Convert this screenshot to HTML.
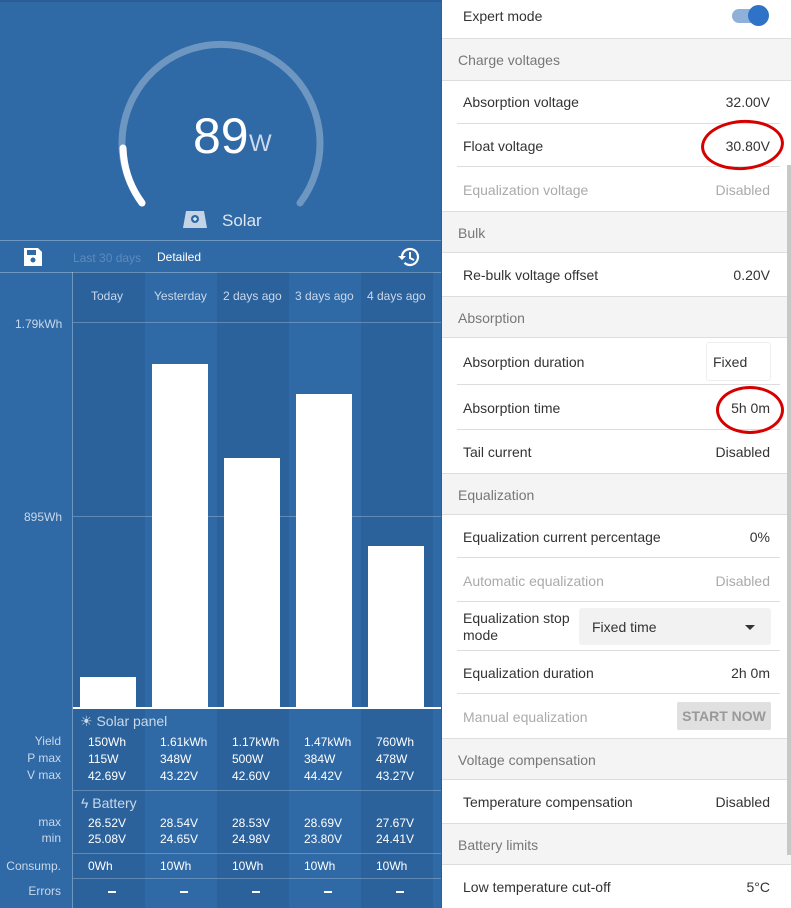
<!DOCTYPE html>
<html><head><meta charset="utf-8"><style>
*{margin:0;padding:0;box-sizing:border-box}
body{width:791px;height:908px;overflow:hidden;font-family:"Liberation Sans",sans-serif;position:relative;background:#fff}
#L{position:absolute;left:0;top:0;width:441px;height:908px;background:#2f69a6;color:#fff;border-top:2px solid #2a5d96}
.a{position:absolute;white-space:nowrap}
.col{position:absolute;top:272px;height:636px;width:72px}
.dk{background:rgba(0,0,0,0.06)}
.bar{position:absolute;background:#fff;width:56px;bottom:201px}
.hl{position:absolute;left:73px;width:368px;height:1px;background:rgba(255,255,255,0.25)}
.t{font-size:12px;color:#fff}
.lb{font-size:12px;color:#c9d8ea;text-align:right;width:61px;left:0}
#R{position:absolute;left:441px;top:0;width:350px;height:908px;background:#fff;border-left:1px solid #2a5f99}
.row{position:absolute;left:0;width:346px;font-size:14px;color:#333}
.row .k{position:absolute;left:21px}
.row .v{position:absolute;right:18px}
.sep{position:absolute;left:15px;right:8px;bottom:0;height:1px;background:#ddd}
.sec{position:absolute;left:0;width:350px;background:#f4f4f4;font-size:14px;color:#777;border-bottom:1px solid #ddd;border-top:1px solid #ddd}
.sec span{position:absolute;left:16px}
.dis{color:#aaa}
.ring{position:absolute;border:3px solid #d50000;border-radius:50%}
</style></head><body>
<div id="L">
<svg class="a" style="left:0;top:-2px" width="441" height="240">
<path d="M142 203 A99 99 0 1 1 300 203" fill="none" stroke="rgba(255,255,255,0.3)" stroke-width="7" stroke-linecap="round"/>
<path d="M142 203 A99 99 0 0 1 123 148" fill="none" stroke="#fff" stroke-width="7" stroke-linecap="round"/>
<path d="M186 211 L204 211 L207 228 L183 228 Z" fill="#c4d4e6"/>
<circle cx="195" cy="219" r="4" fill="#2f69a6"/><path d="M193 219h4M195 217v4" stroke="#fff" stroke-width="1.2"/>
</svg>
<div class="a" style="left:193px;top:106px;font-size:50px;line-height:56px">89</div>
<div class="a" style="left:249px;top:128px;font-size:24px;color:#c9d8ea">W</div>
<div class="a" style="left:222px;top:209px;font-size:17px;color:#dde6f1">Solar</div>
<div class="a" style="left:0;top:238px;width:441px;height:1px;background:rgba(255,255,255,0.3)"></div>
<div class="a" style="left:0;top:270px;width:441px;height:1px;background:rgba(255,255,255,0.3)"></div>
<svg class="a" style="left:23px;top:245px" width="20" height="20"><path d="M1 1h14l4 4v14H1z" fill="#fff"/><rect x="4" y="3" width="9" height="5" fill="#2f69a6"/><circle cx="10" cy="13" r="2.5" fill="#2f69a6"/></svg>
<div class="a" style="left:73px;top:249px;font-size:12px;color:#5d8bbd">Last 30 days</div>
<div class="a" style="left:157px;top:248px;font-size:12px">Detailed</div>
<svg class="a" style="left:397px;top:244px" width="24" height="22" viewBox="0 0 24 22"><path d="M5 11a8 8 0 1 1 2.5 5.8" fill="none" stroke="#fff" stroke-width="2.2"/><path d="M1 10h8l-4 4z" fill="#fff"/><path d="M13 6v6l4 2" fill="none" stroke="#fff" stroke-width="2"/></svg>
<div class="a" style="left:72px;top:270px;width:1px;height:636px;background:rgba(255,255,255,0.3)"></div>
<div style="position:absolute;left:0;top:-2px;width:441px;height:908px">
<div class="col dk" style="left:73px"></div><div class="col" style="left:145px"></div><div class="col dk" style="left:217px"></div><div class="col" style="left:289px"></div><div class="col dk" style="left:361px"></div>
<div class="a" style="left:91px;top:289px;font-size:12px;color:#c9d8ea">Today</div>
<div class="a" style="left:154px;top:289px;font-size:12px;color:#c9d8ea">Yesterday</div>
<div class="a" style="left:223px;top:289px;font-size:12px;color:#c9d8ea">2 days ago</div>
<div class="a" style="left:295px;top:289px;font-size:12px;color:#c9d8ea">3 days ago</div>
<div class="a" style="left:367px;top:289px;font-size:12px;color:#c9d8ea">4 days ago</div>
<div class="a" style="left:15px;top:317px;font-size:12px;color:#c9d8ea">1.79kWh</div>
<div class="a" style="left:24px;top:510px;font-size:12px;color:#c9d8ea">895Wh</div>
<div class="hl" style="top:322px"></div><div class="hl" style="top:516px"></div>
<div class="bar" style="left:80px;top:677px"></div>
<div class="bar" style="left:152px;top:364px"></div>
<div class="bar" style="left:224px;top:458px"></div>
<div class="bar" style="left:296px;top:394px"></div>
<div class="bar" style="left:368px;top:546px"></div>
<div class="hl" style="top:707px;height:2px;background:#fff"></div>
<div class="a" style="left:80px;top:713px;font-size:14px;color:#c9d8ea">☀ Solar panel</div>
<div class="a lb" style="top:734px">Yield</div><div class="a lb" style="top:751px">P max</div><div class="a lb" style="top:768px">V max</div>
<div class="hl" style="top:790px"></div>
<div class="a" style="left:81px;top:795px;font-size:14px;color:#c9d8ea">ϟ Battery</div>
<div class="a lb" style="top:815px">max</div><div class="a lb" style="top:831px">min</div>
<div class="hl" style="top:853px"></div>
<div class="a lb" style="top:859px">Consump.</div>
<div class="hl" style="top:878px"></div>
<div class="a lb" style="top:884px">Errors</div>
<div class="a t" style="left:88px;top:734px;line-height:17px">150Wh<br>115W<br>42.69V</div>
<div class="a t" style="left:160px;top:734px;line-height:17px">1.61kWh<br>348W<br>43.22V</div>
<div class="a t" style="left:232px;top:734px;line-height:17px">1.17kWh<br>500W<br>42.60V</div>
<div class="a t" style="left:304px;top:734px;line-height:17px">1.47kWh<br>384W<br>44.42V</div>
<div class="a t" style="left:376px;top:734px;line-height:17px">760Wh<br>478W<br>43.27V</div>
<div class="a t" style="left:88px;top:815px;line-height:16px">26.52V<br>25.08V</div>
<div class="a t" style="left:160px;top:815px;line-height:16px">28.54V<br>24.65V</div>
<div class="a t" style="left:232px;top:815px;line-height:16px">28.53V<br>24.98V</div>
<div class="a t" style="left:304px;top:815px;line-height:16px">28.69V<br>23.80V</div>
<div class="a t" style="left:376px;top:815px;line-height:16px">27.67V<br>24.41V</div>
<div class="a t" style="left:88px;top:859px">0Wh</div><div class="a t" style="left:160px;top:859px">10Wh</div><div class="a t" style="left:232px;top:859px">10Wh</div><div class="a t" style="left:304px;top:859px">10Wh</div><div class="a t" style="left:376px;top:859px">10Wh</div>
<div class="a" style="left:108px;top:891px;width:8px;height:2px;background:#fff"></div>
<div class="a" style="left:180px;top:891px;width:8px;height:2px;background:#fff"></div>
<div class="a" style="left:252px;top:891px;width:8px;height:2px;background:#fff"></div>
<div class="a" style="left:324px;top:891px;width:8px;height:2px;background:#fff"></div>
<div class="a" style="left:396px;top:891px;width:8px;height:2px;background:#fff"></div>
</div>
</div>
<div id="R">
<div class="row" style="top:0;height:38px"><span class="k" style="top:8px">Expert mode</span>
<div class="a" style="left:290px;top:9px;width:34px;height:14px;border-radius:7px;background:#8fb0d8"></div>
<div class="a" style="left:306px;top:5px;width:21px;height:21px;border-radius:50%;background:#2f73c8"></div></div>
<div class="sec" style="top:38px;height:43px"><span style="top:13px">Charge voltages</span></div>
<div class="row" style="top:81px;height:43px"><span class="k" style="top:13px">Absorption voltage</span><span class="v" style="top:13px">32.00V</span><div class="sep"></div></div>
<div class="row" style="top:124px;height:43px"><span class="k" style="top:14px">Float voltage</span><span class="v" style="top:14px">30.80V</span><div class="sep"></div></div>
<div class="row dis" style="top:167px;height:44px"><span class="k" style="top:15px">Equalization voltage</span><span class="v" style="top:15px">Disabled</span></div>
<div class="sec" style="top:211px;height:42px"><span style="top:13px">Bulk</span></div>
<div class="row" style="top:253px;height:43px"><span class="k" style="top:14px">Re-bulk voltage offset</span><span class="v" style="top:14px">0.20V</span></div>
<div class="sec" style="top:296px;height:42px"><span style="top:13px">Absorption</span></div>
<div class="row" style="top:338px;height:47px"><span class="k" style="top:16px">Absorption duration</span><div class="a" style="left:264px;top:4px;width:65px;height:39px;border:1px solid #eee;border-radius:3px"></div><span class="a" style="left:271px;top:16px">Fixed</span><div class="sep"></div></div>
<div class="row" style="top:385px;height:45px"><span class="k" style="top:15px">Absorption time</span><span class="v" style="top:15px">5h 0m</span><div class="sep"></div></div>
<div class="row" style="top:430px;height:43px"><span class="k" style="top:14px">Tail current</span><span class="v" style="top:14px">Disabled</span></div>
<div class="sec" style="top:473px;height:42px"><span style="top:13px">Equalization</span></div>
<div class="row" style="top:515px;height:43px"><span class="k" style="top:14px">Equalization current percentage</span><span class="v" style="top:14px">0%</span><div class="sep"></div></div>
<div class="row dis" style="top:558px;height:44px"><span class="k" style="top:15px">Automatic equalization</span><span class="v" style="top:15px">Disabled</span><div class="sep"></div></div>
<div class="row" style="top:602px;height:49px"><span class="k" style="top:8px;line-height:17px">Equalization stop<br>mode</span><div class="a" style="left:137px;top:6px;width:192px;height:37px;background:#f2f2f2;border-radius:3px"></div><span class="a" style="left:150px;top:17px">Fixed time</span><div class="a" style="left:303px;top:23px;border:5px solid transparent;border-top:5px solid #333"></div><div class="sep"></div></div>
<div class="row" style="top:651px;height:43px"><span class="k" style="top:14px">Equalization duration</span><span class="v" style="top:14px">2h 0m</span><div class="sep"></div></div>
<div class="row" style="top:694px;height:44px"><span class="k dis" style="top:15px">Manual equalization</span><div class="a" style="left:235px;top:8px;width:94px;height:28px;background:#e0e0e0;border-radius:2px;color:#999;font-size:14px;font-weight:bold;text-align:center;line-height:28px">START NOW</div></div>
<div class="sec" style="top:738px;height:42px"><span style="top:13px">Voltage compensation</span></div>
<div class="row" style="top:780px;height:43px"><span class="k" style="top:14px">Temperature compensation</span><span class="v" style="top:14px">Disabled</span></div>
<div class="sec" style="top:823px;height:42px"><span style="top:13px">Battery limits</span></div>
<div class="row" style="top:865px;height:43px"><span class="k" style="top:14px">Low temperature cut-off</span><span class="v" style="top:14px">5°C</span></div>
<div class="a" style="left:345px;top:165px;width:5px;height:690px;background:#c8c8c8"></div>
<div class="ring" style="left:259px;top:120px;width:83px;height:50px;transform:rotate(-4deg)"></div>
<div class="ring" style="left:274px;top:386px;width:68px;height:48px"></div>
</div>
</body></html>
